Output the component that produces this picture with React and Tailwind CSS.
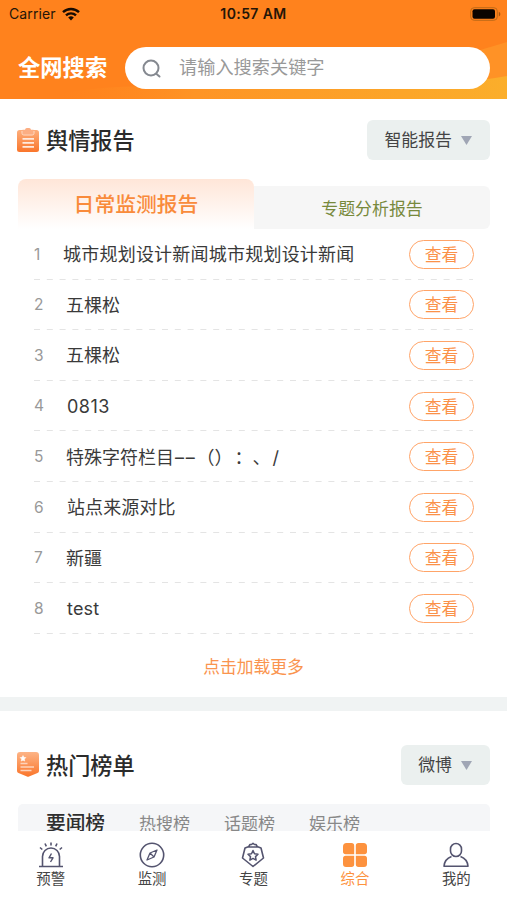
import React from 'react';

const reports = [
    { id: 1, title: '城市规划设计新闻城市规划设计新闻', cls: 'ml-[-3px] tracking-[0.22px]' },
    { id: 2, title: '五棵松', cls: '' },
    { id: 3, title: '五棵松', cls: '' },
    { id: 4, title: '0813', cls: 'pl-px tracking-[0.5px]' },
    { id: 5, title: <>特殊字符栏目<span className="ml-px tracking-[1.7px]">––</span>（）<span className="ml-[2px]">：、</span><span className="ml-[2px]">/</span></>, cls: '' },
    { id: 6, title: '站点来源对比', cls: 'pl-px tracking-[0.1px]' },
    { id: 7, title: '新疆', cls: '' },
    { id: 8, title: 'test', cls: 'pl-px tracking-[0.2px]' },
];

const StatusBar = () => (
    <div className="relative flex h-7 items-center justify-between pl-[9px] pr-[6px] text-[14px] text-[#241508]">
        <div className="-mt-px flex items-center gap-[6px]">
            <span className="tracking-[0.1px]">Carrier</span>
            <svg width="18" height="14" viewBox="0 0 18 14" fill="none" stroke="#170b02" strokeWidth="2.4">
                <path d="M1 5.2a11.5 11.5 0 0 1 16 0" />
                <path d="M4 8.4a7.2 7.2 0 0 1 10 0" />
                <path d="M9 13.5 6.2 10.6a4 4 0 0 1 5.6 0Z" fill="#170b02" stroke="none" />
            </svg>
        </div>
        <span className="absolute top-[3px] left-0 w-full text-center text-[14px] font-semibold tracking-[0.4px]">10:57 AM</span>
        <svg className="-mt-px" width="31" height="14" viewBox="0 0 31 14">
            <rect x="0.7" y="0.7" width="26.6" height="12.6" rx="3.5" fill="none" stroke="#bf6a18" />
            <rect x="2.5" y="2.3" width="22.5" height="9.4" rx="2" fill="#0b0400" />
            <path d="M28.8 4.8v4.6q1.6-.7 1.6-2.3t-1.6-2.3Z" fill="#a9560f" />
        </svg>
    </div>
);

const Header = () => (
    <header className="relative h-[99px] shrink-0 overflow-hidden bg-[#ff821d]">
        <svg className="absolute inset-0" width="507" height="99" viewBox="0 0 507 99">
            <defs>
                <linearGradient id="wave" gradientUnits="userSpaceOnUse" x1="60" x2="507">
                    <stop offset="0" stopColor="#ff8a20" stopOpacity="0" />
                    <stop offset="0.3" stopColor="#fe9425" />
                    <stop offset="1" stopColor="#fbae2b" />
                </linearGradient>
            </defs>
            <path d="M440 62 507 42V99H420Z" fill="#ff9226" />
            <path d="M40 99Q80 86 160 86H400Q460 84 507 76V99Z" fill="url(#wave)" />
        </svg>
        <StatusBar />
        <div className="relative mt-[19px] flex items-center pl-[18px] pr-[17px]">
            <h1 className="w-[107px] text-[22.3px] leading-[42px] font-bold text-white">全网搜索</h1>
            <div className="flex h-[42px] flex-1 items-center rounded-full bg-white pl-[17px]">
                <svg className="mt-[2px]" width="20" height="20" viewBox="0 0 20 20" fill="none" stroke="#858990" strokeWidth="2" strokeLinecap="round">
                    <circle cx="9" cy="9" r="7.5" />
                    <path d="m14.5 15 3 2.500" />
                </svg>
                <span className="ml-[17px] text-[18.2px] text-[#999]">请输入搜索关键字</span>
            </div>
        </div>
    </header>
);

const ReportIcon = () => (
    <svg width="22" height="24" viewBox="0 0 22 24">
        <defs>
            <linearGradient id="clip" x2="0" y2="1">
                <stop stopColor="#fdae7c" />
                <stop offset="1" stopColor="#fa762b" />
            </linearGradient>
        </defs>
        <rect x="0" y="2" width="22" height="22" rx="2.5" fill="url(#clip)" />
        <path d="M5.500 1.800h2.500Q8.300 0 9.800 0h2.400Q13.700 0 14 1.800h2.500V5q0 1.500-1.500 1.500H7Q5.500 6.500 5.500 5Z" fill="#fcae83" />
        <path d="M5 3v2.300Q5 7 6.800 7h8.400Q17 7 17 5.300V3" fill="none" stroke="#fee0cf" strokeWidth="0.9" />
        <path d="M5.500 10.800h11.500M5.500 14.800h11.500M5.500 18.800h11.500" stroke="#ffeadd" strokeWidth="1.700" />
    </svg>
);

const RankIcon = () => (
    <svg width="22" height="25" viewBox="0 0 22 25">
        <defs>
            <linearGradient id="rank" x2="0" y2="1">
                <stop stopColor="#fdb486" />
                <stop offset="1" stopColor="#fa752a" />
            </linearGradient>
        </defs>
        <path d="M3 0h16q3 0 3 3v16q0 1.500-1.500 2L12 24.500q-1 .4-2 0L1.500 21Q0 20.500 0 19V3Q0 0 3 0Z" fill="url(#rank)" />
        <path d="m6 3.500.9 1.800 2 .3-1.500 1.500.3 2L6 8.200l-1.800.9.4-2L3.100 5.600l2-.3Z" fill="#fff" stroke="#fff" strokeWidth="0.5" />
        <path d="M3.500 11.500h7M3.500 15h13.500M3.500 18.500h11" stroke="#fdd3bb" strokeWidth="1.500" />
    </svg>
);

const Dropdown = ({ label }) => (
    <button className="flex h-10 items-center gap-[9px] rounded-[6px] bg-[#ebf0ef] pl-[17px] pr-[18px] text-[16.9px] text-[#444]">
        <span className="mt-[2px]">{label}</span>
        <svg width="11" height="9" viewBox="0 0 11 9">
            <path d="M0 0h11L5.500 9Z" fill="#a0a6b5" />
        </svg>
    </button>
);

const SectionTitle = ({ icon, title, option }) => (
    <div className="flex h-10 items-center justify-between">
        <div className="flex items-center gap-[7px]">
            {icon}
            <h2 className="mt-[2px] text-[22.2px] font-medium text-[#2b2b2b]">{title}</h2>
        </div>
        <Dropdown label={option} />
    </div>
);

const ReportRow = ({ item }) => (
    <li className="flex h-[50.6px] items-center pr-4 pl-[17px]">
        <span className="w-8 text-[15.5px] text-[#999]">{item.id}</span>
        <span className={`mt-px flex-1 whitespace-nowrap text-[18px] text-[#3a3a3a] [text-spacing-trim:space-all] ${item.cls}`}>{item.title}</span>
        <button className="h-[29px] w-[65px] rounded-full border border-[#ffa468] text-[16.8px] leading-[28px] text-[#fb9148]">查看</button>
    </li>
);

// Dashed separator drawn under every report row
const Divider = () => (
    <svg className="absolute bottom-0 left-[17px]" width="439" height="1" viewBox="0 0 439 1">
        <path d="M0 .5H439" stroke="#e4e4e4" strokeDasharray="6 6.8" />
    </svg>
);

const stroke = { width: 28, height: 28, viewBox: '0 0 28 28', fill: 'none', stroke: '#54546f', strokeWidth: 1.6, strokeLinejoin: 'round' };

const AlarmIcon = () => (
    <svg {...stroke}>
        <path d="M2 25.500h24M5.500 25V15.500a8.500 8.500 0 0 1 17 0V25" />
        <path d="m14.500 12.500-2.500 4.300h4L13.500 21" strokeWidth="1.400" />
        <path d="M14 1.500v3M8 2.500l1.300 2.800M20 2.500l-1.300 2.800M3 6.500l2.300 2M25 6.500l-2.300 2" />
    </svg>
);

const CompassIcon = () => (
    <svg {...stroke}>
        <circle cx="14" cy="14" r="11.700" />
        <path d="m19 9-3 7-7 3 3-7ZM12 12l4 4" strokeWidth="1.300" />
    </svg>
);

const TopicIcon = () => (
    <svg {...stroke}>
        <path d="M10 5.500 6 7 3.500 17 14 25.500 24.500 17 22 7 18 5.500M9.500 6l1.500-2.500h1.500L14 2.300l1.500 1.200H17L18.500 6Z" />
        <path d="m14 9.500 1.500 3.200 3.500.5-2.500 2.400.6 3.500-3.100-1.700-3.100 1.700.6-3.500L9 13.200l3.500-.5Z" strokeWidth="1.500" />
    </svg>
);

const GridIcon = () => (
    <svg width="28" height="28" viewBox="0 0 28 28">
        <g fill="#fd923e">
            <path d="M5.500 2h5q2.700 0 2.700 2.700v8.500H4.700Q2 13.200 2 10.500v-5Q2 2 5.500 2Z" />
            <path d="M17.500 2h5Q26 2 26 5.500v5q0 2.700-2.700 2.700h-8.500V4.700q0-2.700 2.700-2.700Z" />
            <path d="M4.700 14.800h8.500v8.500q0 2.700-2.700 2.700H5q-3 0-3-3v-5.500q0-2.700 2.700-2.700Z" />
            <path d="M14.800 14.800h8.500q2.700 0 2.700 2.700V23q0 3-3 3h-5.500q-2.700 0-2.700-2.700Z" />
        </g>
    </svg>
);

const UserIcon = () => (
    <svg {...stroke}>
        <rect x="8.500" y="2.500" width="11" height="13" rx="5.500" />
        <path d="M9.500 15.500Q2.500 18 2 25.300h24Q25.500 18 18.500 15.500" />
    </svg>
);

const tabs = [
    { label: '预警', Icon: AlarmIcon },
    { label: '监测', Icon: CompassIcon },
    { label: '专题', Icon: TopicIcon },
    { label: '综合', Icon: GridIcon, active: true },
    { label: '我的', Icon: UserIcon },
];

export default function App() {
    return (
        <div lang="zh-CN" className="flex h-[900px] w-[507px] flex-col overflow-hidden bg-white font-['Inter','Noto_Sans_CJK_SC',sans-serif]">
            <Header />

            <main className="min-h-0 flex-1 overflow-hidden">
                {/* Reports */}
                <section className="h-[598px] px-[17px] pt-[21px]">
                    <SectionTitle icon={<ReportIcon />} title="舆情报告" option="智能报告" />
                    <div className="mt-[19px] flex h-[50px] items-start pl-px">
                        <div className="h-[50px] w-[236px] rounded-t-[8px] bg-linear-to-b from-[#ffe6d8] to-white text-center text-[20.8px] leading-[52px] font-medium text-[#f98b3b]">日常监测报告</div>
                        <div className="mt-[7px] h-[43px] flex-1 rounded-r-[6px] bg-[#f6f6f6] text-center text-[16.9px] leading-[47px] text-[#78893c]">专题分析报告</div>
                    </div>
                    <ul>
                        {reports.map(item => (
                            <div key={item.id} className="relative">
                                <ReportRow item={item} />
                                <Divider />
                            </div>
                        ))}
                    </ul>
                    <p className="mt-[19px] text-center text-[16.8px] leading-7 text-[#fa944e]">点击加载更多</p>
                </section>

                <div className="h-[14px] bg-[#f0f3f3]" />

                {/* Hot rankings */}
                <section className="px-[17px] pt-[34px]">
                    <SectionTitle icon={<RankIcon />} title="热门榜单" option="微博" />
                    <div className="mt-[19px] ml-px flex h-[50px] items-start rounded-t-[5px] bg-[#f5f6f8] pl-[28px] text-[17px] leading-[41px] text-[#888]">
                        <span className="w-[93px] text-[19.7px] leading-[39px] font-medium text-[#2f2f2f]">要闻榜</span>
                        <span className="w-[85px]">热搜榜</span>
                        <span className="w-[85px]">话题榜</span>
                        <span>娱乐榜</span>
                    </div>
                </section>
            </main>

            <nav className="grid h-[69px] shrink-0 grid-cols-5 bg-white">
                {tabs.map(({ label, Icon, active }) => (
                    <div key={label} className={`flex flex-col items-center pt-[10px] text-[14.4px] leading-[20px] ${active ? 'text-[#fd923e]' : 'text-[#444]'}`}>
                        <Icon />
                        <span>{label}</span>
                    </div>
                ))}
            </nav>
        </div>
    );
}
